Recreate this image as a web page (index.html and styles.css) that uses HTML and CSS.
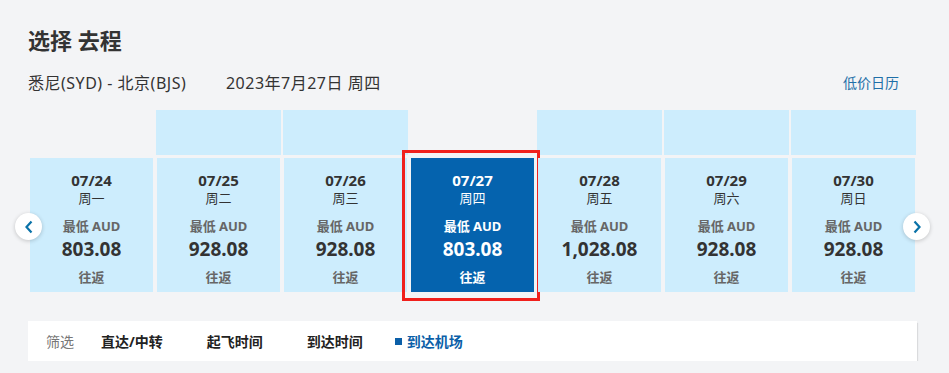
FILE: index.html
```html
<!DOCTYPE html>
<html>

<head>
  <meta charset="UTF-8" />
  <meta name="viewport" content="width=device-width, initial-scale=1.0">
  <title>选择 去程</title>
  <link rel="stylesheet" href="styles.css">
</head>

<body>
  <div class="page">
    <h1>选择 去程</h1>

    <div class="trip-row">
      <div class="trip-info">
        <span>悉尼(SYD) - 北京(BJS)</span>
        <span class="trip-date">2023年7月27日 周四</span>
      </div>
      <a href="#" class="calendar-link">低价日历</a>
    </div>

    <div class="carousel">
      <button class="nav-btn nav-prev" aria-label="上一周">
        <svg width="10" height="14" viewBox="0 0 10 14"><polyline points="7.5,1.5 2.5,7 7.5,12.5" /></svg>
      </button>

      <div class="day-list">
        <div class="day">
          <div class="day-bar empty"></div>
          <div class="day-card">
            <div class="day-date">07/24</div>
            <div class="day-week">周一</div>
            <div class="day-label">最低 AUD</div>
            <div class="day-price">803.08</div>
            <div class="day-type">往返</div>
          </div>
        </div>
        <div class="day">
          <div class="day-bar"></div>
          <div class="day-card">
            <div class="day-date">07/25</div>
            <div class="day-week">周二</div>
            <div class="day-label">最低 AUD</div>
            <div class="day-price">928.08</div>
            <div class="day-type">往返</div>
          </div>
        </div>
        <div class="day">
          <div class="day-bar"></div>
          <div class="day-card">
            <div class="day-date">07/26</div>
            <div class="day-week">周三</div>
            <div class="day-label">最低 AUD</div>
            <div class="day-price">928.08</div>
            <div class="day-type">往返</div>
          </div>
        </div>
        <div class="day">
          <div class="day-bar empty"></div>
          <div class="day-card active">
            <div class="day-date">07/27</div>
            <div class="day-week">周四</div>
            <div class="day-label">最低 AUD</div>
            <div class="day-price">803.08</div>
            <div class="day-type">往返</div>
          </div>
        </div>
        <div class="day">
          <div class="day-bar"></div>
          <div class="day-card">
            <div class="day-date">07/28</div>
            <div class="day-week">周五</div>
            <div class="day-label">最低 AUD</div>
            <div class="day-price">1,028.08</div>
            <div class="day-type">往返</div>
          </div>
        </div>
        <div class="day">
          <div class="day-bar"></div>
          <div class="day-card">
            <div class="day-date">07/29</div>
            <div class="day-week">周六</div>
            <div class="day-label">最低 AUD</div>
            <div class="day-price">928.08</div>
            <div class="day-type">往返</div>
          </div>
        </div>
        <div class="day">
          <div class="day-bar"></div>
          <div class="day-card">
            <div class="day-date">07/30</div>
            <div class="day-week">周日</div>
            <div class="day-label">最低 AUD</div>
            <div class="day-price">928.08</div>
            <div class="day-type">往返</div>
          </div>
        </div>
      </div>

      <button class="nav-btn nav-next" aria-label="下一周">
        <svg width="10" height="14" viewBox="0 0 10 14"><polyline points="2.5,1.5 7.5,7 2.5,12.5" /></svg>
      </button>
    </div>

    <div class="filter-bar">
      <span class="filter-title">筛选</span>
      <span class="filter-item">直达/中转</span>
      <span class="filter-item">起飞时间</span>
      <span class="filter-item">到达时间</span>
      <span class="filter-item selected">到达机场</span>
    </div>
  </div>
</body>

</html>
```

FILE: styles.css
```css
* {
  margin: 0;
  padding: 0;
  box-sizing: border-box;
}

body {
  background-color: #f3f4f6;
  color: #333;
  font-family: "Noto Sans", "Noto Sans CJK SC", sans-serif;
}

a {
  text-decoration: none;
}

.page {
  padding: 0 32px 0 28px;
}

h1 {
  margin-top: 25px;
  font-size: 22px;
  line-height: 30px;
  font-weight: bold;
  color: #333;
}

.trip-row {
  display: flex;
  justify-content: space-between;
  align-items: center;
  margin-top: 18px;
  font-size: 16px;
  line-height: 20px;
  color: #333;
}

.trip-info {
  letter-spacing: 0.5px;
}

.trip-date {
  margin-left: 35px;
}

.calendar-link {
  margin-right: 18px;
  font-size: 14px;
  color: #1f6fa8;
}

/* date carousel */
.carousel {
  position: relative;
  margin-top: 17px;
  padding: 0 2px;
}

.day-list {
  display: flex;
  gap: 4px;
}

.day {
  width: 123px;
  display: flex;
  flex-direction: column;
  gap: 3px;
}

.day-bar {
  height: 45px;
  margin: 0 -1px;
  background-color: #cdedfd;
}

.day-bar.empty {
  background: none;
}

.day-card {
  position: relative;
  height: 134px;
  padding-top: 13px;
  background-color: #cdedfd;
  text-align: center;
  color: #333;
}

.day-card.active {
  background-color: #0563ae;
  color: #fff;
}

.day-card.active::after {
  content: "";
  position: absolute;
  top: -8px;
  left: -9px;
  right: -6px;
  bottom: -9px;
  border: 3px solid #f0201c;
}

.day-date {
  font-size: 15px;
  line-height: 18px;
  font-weight: bold;
}

.day-week {
  font-size: 13px;
  line-height: 18px;
}

.day-label {
  margin-top: 10px;
  font-size: 13px;
  line-height: 18px;
  font-weight: bold;
  color: #666;
}

.day-price {
  margin-top: 1px;
  font-size: 19px;
  line-height: 26px;
  font-weight: bold;
}

.day-type {
  margin-top: 6px;
  font-size: 13px;
  line-height: 18px;
  font-weight: bold;
  color: #666;
}

.day-card.active .day-label,
.day-card.active .day-type {
  color: #fff;
}

.nav-btn {
  position: absolute;
  z-index: 2;
  top: 103px;
  width: 27px;
  height: 27px;
  border: none;
  border-radius: 50%;
  background-color: #fff;
  box-shadow: 0 1px 4px rgba(0, 0, 0, 0.2);
  display: flex;
  align-items: center;
  justify-content: center;
  cursor: pointer;
}

.nav-btn svg polyline {
  fill: none;
  stroke: #0a72a8;
  stroke-width: 2.2;
}

.nav-prev {
  left: -13px;
}

.nav-next {
  right: -13px;
}

/* filter bar */
.filter-bar {
  display: flex;
  align-items: center;
  height: 40px;
  margin-top: 29px;
  padding-left: 18px;
  background-color: #fff;
  box-shadow: 1px 2px 1px rgba(0, 0, 0, 0.1);
  font-size: 14px;
}

.filter-title {
  margin-right: 27px;
  color: #777;
}

.filter-item {
  margin-right: 44px;
  font-weight: bold;
  color: #222;
}

.filter-item:nth-child(4) {
  margin-right: 32px;
}

.filter-item.selected {
  display: flex;
  align-items: center;
  color: #0b5fa8;
}

.filter-item.selected::before {
  content: "";
  width: 7px;
  height: 7px;
  margin-right: 5px;
  background-color: #0b5fa8;
}
```
